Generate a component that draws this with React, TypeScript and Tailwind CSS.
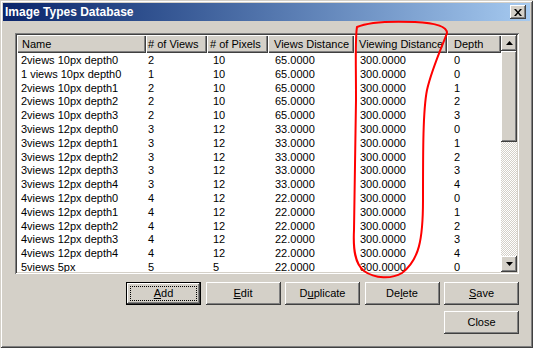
import React from 'react';

const raised =
  'shadow-[inset_-1px_-1px_0_#404040,inset_1px_1px_0_#ffffff,inset_-2px_-2px_0_#808080,inset_2px_2px_0_#d4d0c8]';

const columns = [
  { label: 'Name', w: 'w-[129px]', pl: 'pl-[4px]', hpl: 'pl-[5px]' },
  { label: '# of Views', w: 'w-[61px]', pl: 'pl-[2px]', hpl: 'pl-[2px]' },
  { label: '# of Pixels', w: 'w-[61px]', pl: 'pl-[6px]', hpl: 'pl-[3px]' },
  { label: 'Views Distance', w: 'w-[86px]', pl: 'pl-[7px]', hpl: 'pl-[6px]' },
  { label: 'Viewing Distance', w: 'w-[93px]', pl: 'pl-[6px]', hpl: 'pl-[5px]' },
  { label: 'Depth', w: 'w-[54px]', pl: 'pl-[7px]', hpl: 'pl-[7px]' },
];

const rows: string[][] = [
  ['2views 10px depth0', '2', '10', '65.0000', '300.0000', '0'],
  ['1 views 10px depth0', '1', '10', '65.0000', '300.0000', '0'],
  ['2views 10px depth1', '2', '10', '65.0000', '300.0000', '1'],
  ['2views 10px depth2', '2', '10', '65.0000', '300.0000', '2'],
  ['2views 10px depth3', '2', '10', '65.0000', '300.0000', '3'],
  ['3views 12px depth0', '3', '12', '33.0000', '300.0000', '0'],
  ['3views 12px depth1', '3', '12', '33.0000', '300.0000', '1'],
  ['3views 12px depth2', '3', '12', '33.0000', '300.0000', '2'],
  ['3views 12px depth3', '3', '12', '33.0000', '300.0000', '3'],
  ['3views 12px depth4', '3', '12', '33.0000', '300.0000', '4'],
  ['4views 12px depth0', '4', '12', '22.0000', '300.0000', '0'],
  ['4views 12px depth1', '4', '12', '22.0000', '300.0000', '1'],
  ['4views 12px depth2', '4', '12', '22.0000', '300.0000', '2'],
  ['4views 12px depth3', '4', '12', '22.0000', '300.0000', '3'],
  ['4views 12px depth4', '4', '12', '22.0000', '300.0000', '4'],
  ['5views 5px', '5', '5', '22.0000', '300.0000', '0'],
];

function Arrow({ down }: { down?: boolean }) {
  return (
    <svg width="7" height="4" viewBox="0 0 7 4">
      {down ? <path d="M0 0h7L3.5 4z" fill="#000" /> : <path d="M0 4h7L3.5 0z" fill="#000" />}
    </svg>
  );
}

function WinButton({ children, isDefault }: { children: React.ReactNode; isDefault?: boolean }) {
  if (isDefault) {
    return (
      <div className="w-[75px] h-[23px] border border-black bg-[#d4d0c8]">
        <div className={`h-full ${raised} flex items-center justify-center p-[3px]`}>
          <div className="w-full h-full border border-dotted border-black flex items-center justify-center">
            {children}
          </div>
        </div>
      </div>
    );
  }
  return (
    <div className={`w-[75px] h-[23px] bg-[#d4d0c8] ${raised} flex items-center justify-center`}>
      {children}
    </div>
  );
}

export default function App() {
  return (
    <div className="relative w-[533px] h-[348px] bg-[#d4d0c8] p-[3px] font-['Liberation_Sans',Arial,sans-serif] text-[11px] text-black overflow-hidden shadow-[inset_1px_1px_0_#d4d0c8,inset_-1px_-1px_0_#404040,inset_2px_2px_0_#ffffff,inset_-2px_-2px_0_#808080]">
      {/* Title bar */}
      <div className="h-[18px] flex items-center justify-between bg-gradient-to-r from-[#0a246a] to-[#a6caf0] pl-[2px] pr-[4px]">
        <span className="text-white font-bold text-[12px] leading-none">Image Types Database</span>
        <div className={`w-[16px] h-[14px] bg-[#d4d0c8] ${raised} flex items-center justify-center`}>
          <svg width="8" height="7" viewBox="0 0 8 7">
            <path d="M0 0h2l2 2.5L6 0h2L5 3.5 8 7H6L4 4.5 2 7H0l3-3.5z" fill="#000" />
          </svg>
        </div>
      </div>

      {/* List view */}
      <div className="mt-[12px] ml-[12px] w-[504px] h-[241px] bg-white p-[2px] shadow-[inset_1px_1px_0_#808080,inset_-1px_-1px_0_#ffffff,inset_2px_2px_0_#404040,inset_-2px_-2px_0_#d4d0c8]">
        <div className="flex h-full">
          <div className="w-[484px] overflow-hidden">
            <div className="flex h-[18px] mb-[1px] bg-[#d4d0c8]">
              {columns.map((c) => (
                <div
                  key={c.label}
                  className={`${c.w} ${c.hpl} shrink-0 flex items-center whitespace-nowrap overflow-hidden shadow-[inset_1px_1px_0_#ffffff,inset_-1px_-1px_0_#404040,inset_-2px_-2px_0_#808080]`}
                >
                  {c.label}
                </div>
              ))}
            </div>
            {rows.map((r, i) => (
              <div key={i} className="flex h-[13.8px] leading-[13.8px]">
                {r.map((v, j) => (
                  <div key={j} className={`${columns[j].w} ${columns[j].pl} shrink-0 whitespace-nowrap`}>
                    {v}
                  </div>
                ))}
              </div>
            ))}
          </div>
          {/* Scrollbar */}
          <div className="w-[16px] flex flex-col">
            <div className={`h-[16px] bg-[#d4d0c8] ${raised} flex items-center justify-center`}>
              <Arrow />
            </div>
            <div className={`h-[91px] bg-[#d4d0c8] ${raised}`} />
            <div className="flex-1 bg-[repeating-conic-gradient(#ffffff_0_25%,#d4d0c8_0_50%)] bg-[length:2px_2px]" />
            <div className={`h-[16px] bg-[#d4d0c8] ${raised} flex items-center justify-center`}>
              <Arrow down />
            </div>
          </div>
        </div>
      </div>

      {/* Buttons */}
      <div className="mt-[8px] mr-[11px] flex justify-end gap-[4.5px]">
        <WinButton isDefault>
          <span><span className="underline">A</span>dd</span>
        </WinButton>
        <WinButton>
          <span><span className="underline">E</span>dit</span>
        </WinButton>
        <WinButton>
          <span>D<span className="underline">u</span>plicate</span>
        </WinButton>
        <WinButton>
          <span>De<span className="underline">l</span>ete</span>
        </WinButton>
        <WinButton>
          <span><span className="underline">S</span>ave</span>
        </WinButton>
      </div>
      <div className="mt-[6px] mr-[11px] flex justify-end">
        <WinButton>Close</WinButton>
      </div>

      {/* Red hand-drawn annotation */}
      <svg className="absolute left-0 top-0 pointer-events-none" width="533" height="348" viewBox="0 0 533 348">
        <path
          d="M357 27 C 368 22, 390 21, 415 22 C 437 23, 447 27, 447 33 C 444 42, 432 68, 427 90 C 423 110, 423 150, 423 200 C 423 240, 419 260, 402 273 C 392 279, 375 279, 364 271 C 355 264, 353 250, 354 230 L 356 100 C 356 60, 355 38, 357 27 Z"
          fill="none"
          stroke="#ff0000"
          strokeWidth="2"
          strokeLinejoin="round"
        />
      </svg>
    </div>
  );
}
